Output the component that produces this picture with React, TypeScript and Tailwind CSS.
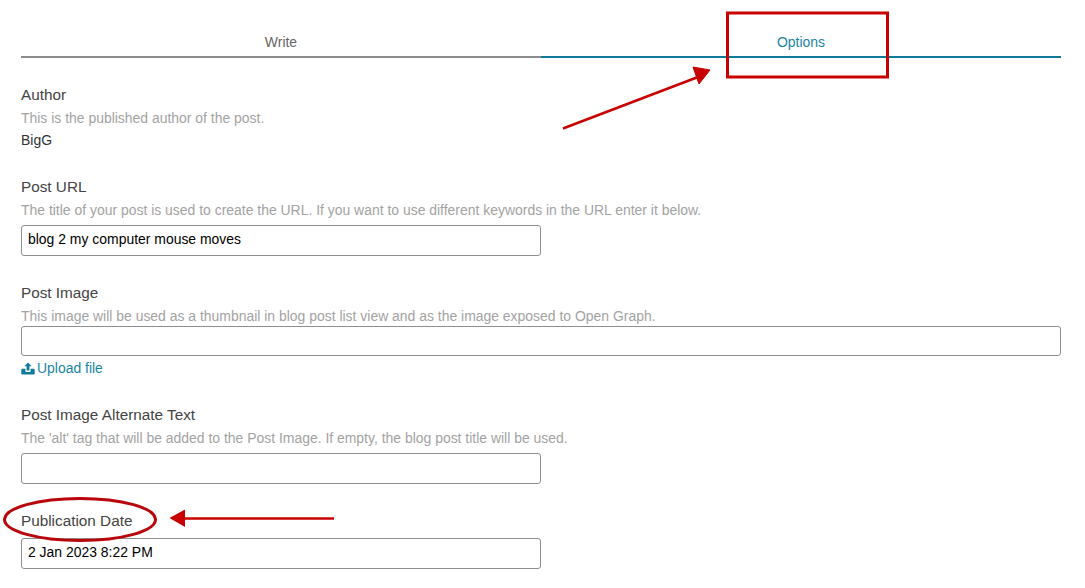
import { useState } from "react";

function UploadIcon() {
  return (
    <svg viewBox="0 0 14 13" className="w-[14px] h-[13px] shrink-0 text-[#0f7a9c]" fill="currentColor">
      <path d="M7 0.5 L10.6 4.2 H8.4 V8.4 H5.6 V4.2 H3.4 Z" />
      <path d="M0.3 8 C0.3 7.2 0.9 6.8 1.5 6.8 H4.4 V9.2 C4.4 9.7 4.8 10 5.2 10 H8.8 C9.2 10 9.6 9.7 9.6 9.2 V6.8 H12.5 C13.1 6.8 13.7 7.2 13.7 8 V11.4 C13.7 12.1 13.1 12.6 12.5 12.6 H1.5 C0.9 12.6 0.3 12.1 0.3 11.4 Z" />
    </svg>
  );
}

function Annotations() {
  return (
    <svg className="absolute left-0 top-0 w-[1085px] h-[588px] pointer-events-none" viewBox="0 0 1085 588" fill="none">
      <rect x="727.5" y="13" width="160" height="64" stroke="#c80000" strokeWidth="3" />
      <path d="M563 128.5 L702 75.5" stroke="#c80000" strokeWidth="2.5" />
      <path d="M693 67 L710 70 L699 84 Z" fill="#c80000" stroke="#c80000" strokeWidth="1" />
      <ellipse cx="80" cy="519.5" rx="75.5" ry="21" stroke="#b8060c" strokeWidth="3" />
      <path d="M334 518.5 L182 518.5" stroke="#c80000" strokeWidth="2.5" />
      <path d="M169.5 518 L185 509.5 L185 527 Z" fill="#c80000" />
    </svg>
  );
}

export default function App() {
  const [url, setUrl] = useState("blog 2 my computer mouse moves");
  const [image, setImage] = useState("");
  const [alt, setAlt] = useState("");
  const [date, setDate] = useState("2 Jan 2023 8:22 PM");

  const inputClass =
    "block h-[31px] w-[520px] rounded-[3px] border border-[#8f8f8f] bg-white px-[6px] pb-[3px] text-[13.95px] text-black outline-none";

  return (
    <div className="relative h-[588px] w-[1085px] overflow-hidden bg-white font-['Liberation_Sans',Arial,sans-serif] text-[13.95px]">
      <div className="w-[1040px] ml-[21px] pt-[28px]">
        {/* Tabs */}
        <div className="flex">
          <div className="w-[520px] h-[30px] border-b-2 border-[#8c8c8c] text-center leading-[28px] text-[#666666]">Write</div>
          <div className="w-[520px] h-[30px] border-b-2 border-[#0f7a9c] text-center leading-[28px] text-[#1a84a6]">Options</div>
        </div>

        {/* Author */}
        <div className="mt-[27px] text-[15.3px] leading-[20px] text-[#444444]">Author</div>
        <div className="mt-[3px] leading-[20px] text-[#a3a3a3]">This is the published author of the post.</div>
        <div className="mt-[2px] leading-[20px] text-[#333333]">BigG</div>

        {/* Post URL */}
        <div className="mt-[27px] text-[15.3px] leading-[20px] text-[#444444]">Post URL</div>
        <div className="mt-[3px] leading-[20px] text-[#a3a3a3]">
          The title of your post is used to create the URL. If you want to use different keywords in the URL enter it below.
        </div>
        <input className={`${inputClass} mt-[5px]`} value={url} onChange={(e) => setUrl(e.target.value)} />

        {/* Post Image */}
        <div className="mt-[27px] text-[15.3px] leading-[20px] text-[#444444]">Post Image</div>
        <div className="mt-[3px] leading-[20px] text-[#a3a3a3]">
          This image will be used as a thumbnail in blog post list view and as the image exposed to Open Graph.
        </div>
        <input className="block h-[30px] w-full rounded-[3px] border border-[#8f8f8f] bg-white px-[6px] text-[13.95px] outline-none" value={image} onChange={(e) => setImage(e.target.value)} />
        <div className="mt-[2px] flex h-[20px] items-center gap-[2px] text-[#1a84a6]">
          <UploadIcon />
          <span>Upload file</span>
        </div>

        {/* Alt text */}
        <div className="mt-[27px] text-[15.3px] leading-[20px] text-[#444444]">Post Image Alternate Text</div>
        <div className="mt-[3px] leading-[20px] text-[#a3a3a3]">
          The 'alt' tag that will be added to the Post Image. If empty, the blog post title will be used.
        </div>
        <input className={`${inputClass} mt-[5px]`} value={alt} onChange={(e) => setAlt(e.target.value)} />

        {/* Publication date */}
        <div className="mt-[27px] text-[15.3px] leading-[20px] text-[#444444]">Publication Date</div>
        <input className={`${inputClass} mt-[7px]`} value={date} onChange={(e) => setDate(e.target.value)} />
      </div>
      <Annotations />
    </div>
  );
}
